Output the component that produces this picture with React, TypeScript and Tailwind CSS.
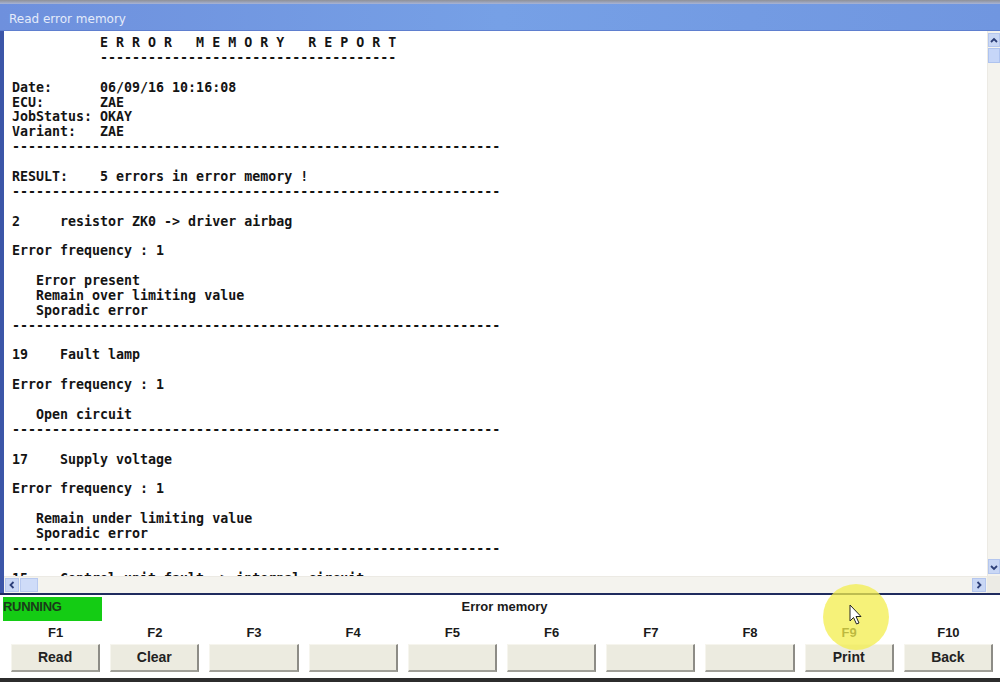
import React from "react";

const DASH = "-".repeat(61);
const lines: string[] = [
  "           E R R O R   M E M O R Y   R E P O R T",
  "           " + "-".repeat(37),
  "",
  "Date:      06/09/16 10:16:08",
  "ECU:       ZAE",
  "JobStatus: OKAY",
  "Variant:   ZAE",
  DASH,
  "",
  "RESULT:    5 errors in error memory !",
  DASH,
  "",
  "2     resistor ZK0 -> driver airbag",
  "",
  "Error frequency : 1",
  "",
  "   Error present",
  "   Remain over limiting value",
  "   Sporadic error",
  DASH,
  "",
  "19    Fault lamp",
  "",
  "Error frequency : 1",
  "",
  "   Open circuit",
  DASH,
  "",
  "17    Supply voltage",
  "",
  "Error frequency : 1",
  "",
  "   Remain under limiting value",
  "   Sporadic error",
  DASH,
  "",
  "15    Control unit fault -> internal circuit",
];

const keys = [
  { f: "F1", label: "Read" },
  { f: "F2", label: "Clear" },
  { f: "F3", label: "" },
  { f: "F4", label: "" },
  { f: "F5", label: "" },
  { f: "F6", label: "" },
  { f: "F7", label: "" },
  { f: "F8", label: "" },
  { f: "F9", label: "Print" },
  { f: "F10", label: "Back" },
];

function Chevron({ dir }: { dir: "up" | "down" | "left" | "right" }) {
  const paths: Record<string, string> = {
    up: "M2 7 L5 4 L8 7",
    down: "M2 4 L5 7 L8 4",
    left: "M6.5 2 L3.5 5 L6.5 8",
    right: "M3.5 2 L6.5 5 L3.5 8",
  };
  return (
    <svg width="10" height="10" viewBox="0 0 10 10">
      <path d={paths[dir]} fill="none" stroke="#2d3f78" strokeWidth="1.8" />
    </svg>
  );
}

export default function App() {
  return (
    <div
      className="relative w-[1000px] h-[682px] overflow-hidden flex flex-col bg-white"
      style={{ fontFamily: '"Liberation Sans", Arial, sans-serif' }}
    >
      <div className="h-[4px] bg-gradient-to-b from-[#8e9096] to-[#a7b4d8]" />
      {/* Title bar */}
      <div className="h-[27px] flex items-center pl-[9px] pt-[3px] bg-gradient-to-r from-[#6e90dd] via-[#76a0e6] to-[#7096e0] border-b border-[#5f7fcf]">
        <span
          className="text-[12px] text-[#e4ebfa]"
          style={{ fontFamily: '"DejaVu Sans", sans-serif' }}
        >
          Read error memory
        </span>
      </div>
      {/* Main area */}
      <div className="h-[562px] flex">
        <div className="w-[4px] bg-[#3c56a8]" />
        <div className="flex-1 flex flex-col">
          <div className="flex-1 flex min-h-0">
            <pre
              className="flex-1 overflow-hidden pl-[8px] pt-[5px] text-[13.3px] leading-[14.88px] font-bold text-[#141414]"
              style={{ fontFamily: '"DejaVu Sans Mono", monospace' }}
            >
              {lines.join("\n")}
            </pre>
            {/* vertical scrollbar */}
            <div className="w-[13px] bg-[#f4f3ee] border-l border-[#eceae4] flex flex-col pt-[2px]">
              <div className="h-[14px] bg-[#c9d7f5] border border-[#b4c6ee] flex items-center justify-center">
                <Chevron dir="up" />
              </div>
              <div className="h-[15px] mt-[1px] bg-[#c6d6f8] border border-[#aec3ef]" />
              <div className="flex-1" />
              <div className="h-[15px] mb-[2px] bg-[#c9d7f5] border border-[#b4c6ee] flex items-center justify-center">
                <Chevron dir="down" />
              </div>
            </div>
          </div>
          {/* horizontal scrollbar */}
          <div className="h-[17px] flex bg-[#f4f3ee] border-t border-[#eceae4]">
            <div className="flex-1 flex items-center pl-[1px]">
              <div className="w-[14px] h-[14px] bg-[#c9d7f5] border border-[#b4c6ee] flex items-center justify-center">
                <Chevron dir="left" />
              </div>
              <div className="w-[18px] h-[14px] ml-[1px] bg-[#cfdcf8] border border-[#b8c9ef]" />
              <div className="flex-1" />
              <div className="w-[14px] h-[14px] mr-[1px] bg-[#c9d7f5] border border-[#b4c6ee] flex items-center justify-center">
                <Chevron dir="right" />
              </div>
            </div>
            <div className="w-[13px] bg-[#ecebe5]" />
          </div>
        </div>
      </div>
      <div className="h-[2px] bg-[#1f2b5e]" />
      {/* Bottom panel */}
      <div className="h-[83px] flex flex-col bg-white">
        <div className="h-[27px] grid grid-cols-[1fr_auto_1fr] items-start pl-[3px] pt-[2px]">
          <div className="w-[99px] h-[24px] bg-[#14cc14] text-[13px] font-bold text-[#1a3a1a] leading-[20px] tracking-[-0.3px]">
            RUNNING
          </div>
          <div className="text-[13px] font-bold text-[#1a1a1a] leading-[20px] pl-[6px]">
            Error memory
          </div>
          <div />
        </div>
        <div className="grid grid-cols-10 pl-[6px] pr-[2px]">
          {keys.map((k) => (
            <div key={k.f} className="flex flex-col items-center">
              <div className="h-[22px] flex items-center text-[13px] font-bold text-[#1a1a1a]">
                {k.f}
              </div>
              <div className="w-full px-[5px]">
                <div className="h-[28px] bg-[#ecebe0] border-t border-l border-[#f6f5ee] border-r-2 border-b-2 border-r-[#8d8c86] border-b-[#a09f98] flex items-center justify-center text-[14px] font-bold text-[#222]">
                  {k.label}
                </div>
              </div>
            </div>
          ))}
        </div>
      </div>
      <div className="h-[4px] bg-[#2c2c2c]" />

      {/* Cursor highlight overlay */}
      <div className="absolute left-[823px] top-[584px] w-[66px] h-[66px] rounded-full bg-[#f3ee4c]/75 pointer-events-none" />
      <svg
        className="absolute left-[849px] top-[604px] pointer-events-none"
        width="14"
        height="22"
        viewBox="0 0 14 22"
      >
        <path
          d="M1 1 L1 17 L4.5 13.5 L7.5 20 L10 19 L7 12.5 L12 12.5 Z"
          fill="#ffffff"
          stroke="#222"
          strokeWidth="1"
          strokeLinejoin="round"
        />
      </svg>
    </div>
  );
}
